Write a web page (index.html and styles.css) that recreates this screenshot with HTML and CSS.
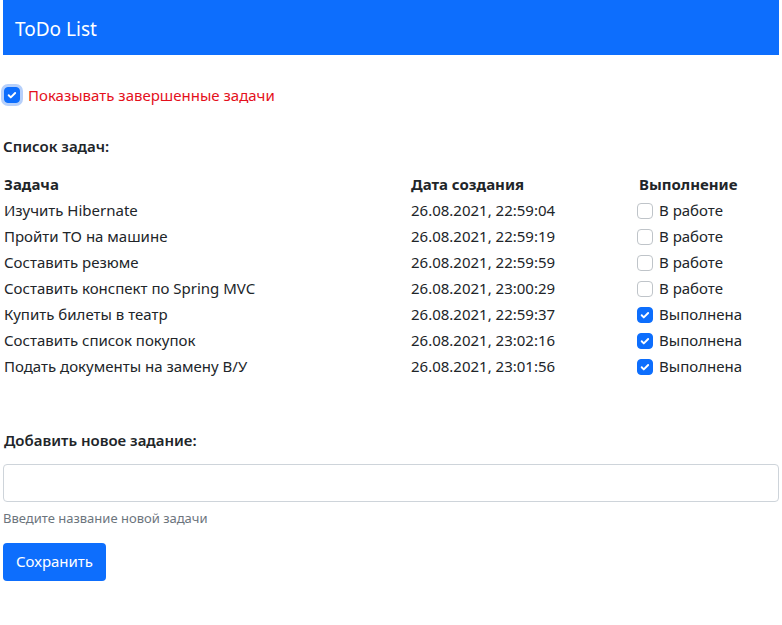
FILE: index.html
```html
<!DOCTYPE html>
<html lang="ru">
<head>
<meta charset="utf-8">
<title>ToDo List</title>
<link rel="stylesheet" href="styles.css">
</head>
<body>
<div class="page">
  <header class="navbar"><span class="brand">ToDo List</span></header>

  <label class="show-done">
    <span class="check checked focus"><svg viewBox="0 0 16 16"><path d="M4.2 8.3l2.4 2.4 5-5" fill="none" stroke="#fff" stroke-width="2.2" stroke-linecap="round" stroke-linejoin="round"/></svg></span>
    <span class="show-text">Показывать завершенные задачи</span>
  </label>

  <h2 class="section-title">Список задач:</h2>

  <div class="tasks">
    <div class="th">Задача</div><div class="th">Дата создания</div><div class="th">Выполнение</div>

    <div class="td">Изучить Hibernate</div><div class="td">26.08.2021, 22:59:04</div>
    <div class="td status"><span class="check"></span>В работе</div>

    <div class="td">Пройти ТО на машине</div><div class="td">26.08.2021, 22:59:19</div>
    <div class="td status"><span class="check"></span>В работе</div>

    <div class="td">Составить резюме</div><div class="td">26.08.2021, 22:59:59</div>
    <div class="td status"><span class="check"></span>В работе</div>

    <div class="td">Составить конспект по Spring MVC</div><div class="td">26.08.2021, 23:00:29</div>
    <div class="td status"><span class="check"></span>В работе</div>

    <div class="td">Купить билеты в театр</div><div class="td">26.08.2021, 22:59:37</div>
    <div class="td status"><span class="check checked"><svg viewBox="0 0 16 16"><path d="M4.2 8.3l2.4 2.4 5-5" fill="none" stroke="#fff" stroke-width="2.2" stroke-linecap="round" stroke-linejoin="round"/></svg></span>Выполнена</div>

    <div class="td">Составить список покупок</div><div class="td">26.08.2021, 23:02:16</div>
    <div class="td status"><span class="check checked"><svg viewBox="0 0 16 16"><path d="M4.2 8.3l2.4 2.4 5-5" fill="none" stroke="#fff" stroke-width="2.2" stroke-linecap="round" stroke-linejoin="round"/></svg></span>Выполнена</div>

    <div class="td">Подать документы на замену В/У</div><div class="td">26.08.2021, 23:01:56</div>
    <div class="td status"><span class="check checked"><svg viewBox="0 0 16 16"><path d="M4.2 8.3l2.4 2.4 5-5" fill="none" stroke="#fff" stroke-width="2.2" stroke-linecap="round" stroke-linejoin="round"/></svg></span>Выполнена</div>
  </div>

  <form class="add-form">
    <h2 class="section-title add-title">Добавить новое задание:</h2>
    <input class="input" type="text">
    <div class="help">Введите название новой задачи</div>
    <button class="btn" type="button">Сохранить</button>
  </form>
</div>
</body>
</html>
```

FILE: styles.css
```css
* { box-sizing: border-box; }
html, body { margin: 0; padding: 0; background: #fff; }
body {
  font-family: "Noto Sans", "Open Sans", sans-serif;
  font-size: 15px;
  line-height: 1.5;
  color: #212529;
}
.page { padding: 0 3px; }

.navbar {
  height: 55px;
  background: #0d6efd;
  display: flex;
  align-items: center;
  padding: 4px 12px 0;
}
.brand { color: #fff; font-size: 19px; }

.show-done {
  display: flex;
  align-items: center;
  gap: 8px;
  margin-top: 30px;
  height: 20px;
}
.show-text { color: #e4101c; }

.check {
  width: 16px;
  height: 16px;
  border: 1px solid #bfc4c9;
  border-radius: 4px;
  background: #fff;
  flex: none;
  display: inline-flex;
  align-items: center;
  justify-content: center;
}
.check svg { width: 14px; height: 14px; }
.check.checked { background: #0d6efd; border-color: #0d6efd; }
.check.focus { box-shadow: 0 0 0 3px #b6d0fb; margin-left: 1px; }

.section-title {
  font-size: 15px;
  font-weight: 600;
  margin: 0;
}
.show-done + .section-title { margin-top: 30px; }

.tasks {
  display: grid;
  grid-template-columns: 407px 228px 1fr;
  margin-top: 14px;
  padding-left: 1px;
}
.th { font-weight: 700; height: 26px; display: flex; align-items: center; }
.td { height: 26px; display: flex; align-items: center; }
.status { gap: 6px; margin-left: -2px; }

.add-form { margin-top: 49px; }
.add-title { padding-left: 1px; }
.input {
  display: block;
  width: 100%;
  height: 38px;
  margin-top: 13px;
  border: 1px solid #ced4da;
  border-radius: 4px;
  font: inherit;
}
.help {
  font-size: 13px;
  color: #6c757d;
  margin-top: 7px;
}
.btn {
  margin-top: 14px;
  height: 38px;
  padding: 0 13px;
  background: #0d6efd;
  color: #fff;
  border: none;
  border-radius: 4px;
  font: inherit;
  font-size: 15px;
}
```
